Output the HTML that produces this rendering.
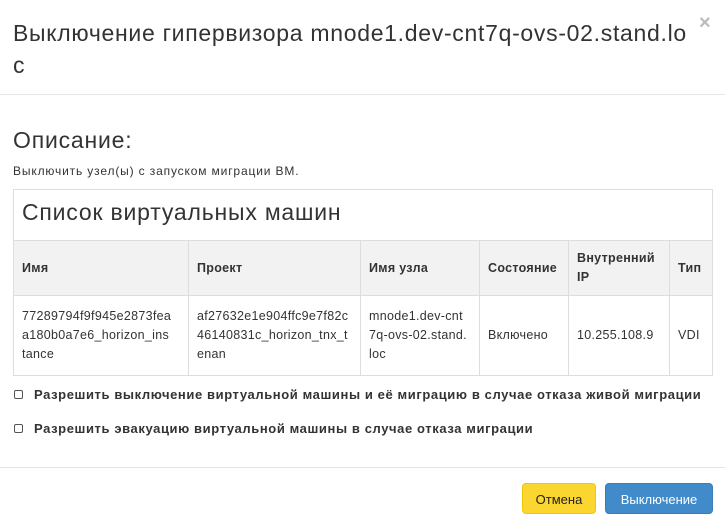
<!DOCTYPE html>
<html><head><meta charset="utf-8"><style>
*{margin:0;padding:0;box-sizing:border-box}
body{width:725px;height:525px;background:#fff;font-family:"Liberation Sans",sans-serif;color:#333;position:relative;overflow:hidden}
.a{position:absolute;white-space:nowrap}
table{position:absolute;left:13px;top:240px;width:700px;border-collapse:collapse;font-size:12.5px}
td,th{border:1px solid #ddd;padding:0 8px;text-align:left;vertical-align:middle;line-height:19px;white-space:nowrap}
th{background:#f2f2f2;height:55px;font-weight:bold;letter-spacing:0.3px}
td{height:80px;letter-spacing:0.3px}
.cb{position:absolute;left:14px;width:9px;height:9px;border:1px solid #555;border-radius:2px}
.lb{font-weight:bold;font-size:13px;left:34px;letter-spacing:0.6px}
.btn{position:absolute;top:483px;height:31px;border-radius:4px;font-size:13px;text-align:center;line-height:31px}
</style></head><body>
<div class="a" style="left:13px;top:20px;font-size:23px;letter-spacing:0.7px">Выключение гипервизора mnode1.dev-cnt7q-ovs-02.stand.lo</div>
<div class="a" style="left:13px;top:52px;font-size:23px">c</div>
<div class="a" style="left:699px;top:12px;font-size:20px;color:#bbb;font-weight:bold">×</div>
<div class="a" style="left:0;top:94px;width:725px;border-top:1px solid #e5e5e5"></div>
<div class="a" style="left:13px;top:127px;font-size:23px;letter-spacing:0.8px">Описание:</div>
<div class="a" style="left:13px;top:164px;font-size:12px;letter-spacing:0.85px">Выключить узел(ы) с запуском миграции ВМ.</div>
<div class="a" style="left:13px;top:189px;width:700px;height:52px;border:1px solid #ddd;border-bottom:none"></div>
<div class="a" style="left:22px;top:199px;font-size:23px;letter-spacing:0.8px">Список виртуальных машин</div>
<table>
<tr><th style="width:175px">Имя</th><th style="width:172px">Проект</th><th style="width:119px">Имя узла</th><th style="width:89px">Состояние</th><th style="width:101px">Внутренний<br>IP</th><th>Тип</th></tr>
<tr><td>77289794f9f945e2873fea<br>a180b0a7e6_horizon_ins<br>tance</td><td>af27632e1e904ffc9e7f82c<br>46140831c_horizon_tnx_t<br>enan</td><td>mnode1.dev-cnt<br>7q-ovs-02.stand.<br>loc</td><td>Включено</td><td>10.255.108.9</td><td>VDI</td></tr>
</table>
<div class="cb" style="top:390px"></div>
<div class="a lb" style="top:387px">Разрешить выключение виртуальной машины и её миграцию в случае отказа живой миграции</div>
<div class="cb" style="top:424px"></div>
<div class="a lb" style="top:421px">Разрешить эвакуацию виртуальной машины в случае отказа миграции</div>
<div class="a" style="left:0;top:467px;width:725px;border-top:1px solid #e5e5e5"></div>
<div class="btn" style="left:522px;width:74px;background:#fcd630;border:1px solid #f0c800;color:#222">Отмена</div>
<div class="btn" style="left:605px;width:108px;background:#428bca;border:1px solid #3a7cb8;color:#fff">Выключение</div>
</body></html>
